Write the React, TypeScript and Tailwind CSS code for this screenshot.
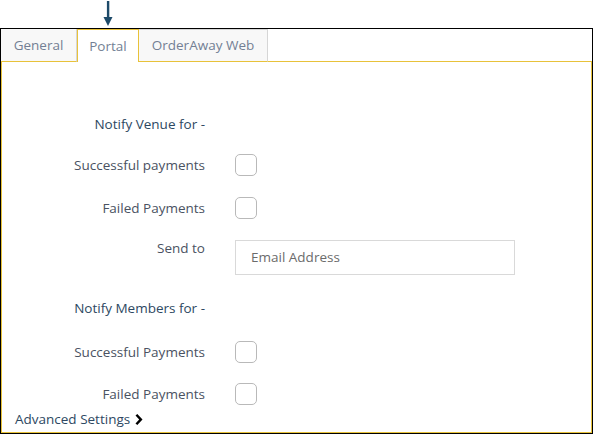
import React from "react";

function Checkbox() {
  return <div className="h-[22px] w-[22px] rounded-[5px] border border-[#b9b9b9] bg-white" />;
}

function Row({ label, children, heading = false, labelClass = "" }: { label: string; children?: React.ReactNode; heading?: boolean; labelClass?: string }) {
  return (
    <div className="flex items-center">
      <div
        className={`w-[203px] text-right text-[13.5px] leading-[16px] ${heading ? "font-medium text-[#2d4862]" : "text-[#4a5262]"} ${labelClass}`}
      >
        {label}
      </div>
      <div className="ml-[30px]">{children}</div>
    </div>
  );
}

export default function App() {
  return (
    <div className="h-[434px] w-[593px] bg-white font-['Open_Sans',sans-serif]">
      {/* arrow */}
      <div className="relative h-[28px]">
        <svg className="absolute left-[102px] top-0" width="12" height="28" viewBox="0 0 12 28">
          <rect x="4.9" y="1" width="2.4" height="18" fill="#1d4a69" />
          <polygon points="1.5,17 10.5,17 6,26" fill="#1d4a69" />
        </svg>
      </div>
      <div className="flex h-[406px] w-[593px] flex-col border border-black">
        {/* tabs */}
        <div className="flex h-[33px] text-[13.5px] text-[#737f94]">
          <div className="flex w-[76px] items-center justify-center border-b border-r border-[#d6d6d6] border-b-[#e8c23a] bg-[#f8f8f8]">
            General
          </div>
          <div className="flex w-[62px] items-center justify-center border-x border-t border-[#e8c23a] bg-white">
            Portal
          </div>
          <div className="flex w-[129px] items-center justify-center border-b border-r border-t border-[#d6d6d6] border-b-[#e8c23a] bg-[#f8f8f8]">
            OrderAway Web
          </div>
          <div className="flex-1 border-b border-[#e8c23a]" />
        </div>
        {/* content */}
        <div className="flex flex-1 flex-col border-x border-b border-[#e8c23a] pt-[52px]">
          <div className="h-[20px]">
            <Row label="Notify Venue for -" heading labelClass="leading-[20px]" />
          </div>
          <div className="mt-[20px]">
            <Row label="Successful payments">
              <Checkbox />
            </Row>
          </div>
          <div className="mt-[21px]">
            <Row label="Failed Payments">
              <Checkbox />
            </Row>
          </div>
          <div className="mt-[21px] flex items-start">
            <div className="w-[203px] pt-[0px] text-right text-[13.5px] leading-[16px] text-[#4a5262]">Send to</div>
            <div className="ml-[30px] flex h-[35px] w-[280px] items-center border border-[#d9d9d9] px-[15px] text-[13.5px] text-[#6b6b6b]">
              Email Address
            </div>
          </div>
          <div className="mt-[23px] h-[20px]">
            <Row label="Notify Members for -" heading labelClass="leading-[20px]" />
          </div>
          <div className="mt-[23px]">
            <Row label="Successful Payments">
              <Checkbox />
            </Row>
          </div>
          <div className="mt-[20px]">
            <Row label="Failed Payments">
              <Checkbox />
            </Row>
          </div>
          <div className="ml-[13px] mt-[6px] flex items-center text-[13.5px] leading-[16px] text-[#2d4862]">
            Advanced Settings
            <svg className="ml-[5px]" width="8" height="11" viewBox="0 0 8 11">
              <polygon points="0.5,1.6 2.3,0 7.5,5.5 2.3,11 0.5,9.4 4.2,5.5" fill="#000" />
            </svg>
          </div>
        </div>
      </div>
    </div>
  );
}
